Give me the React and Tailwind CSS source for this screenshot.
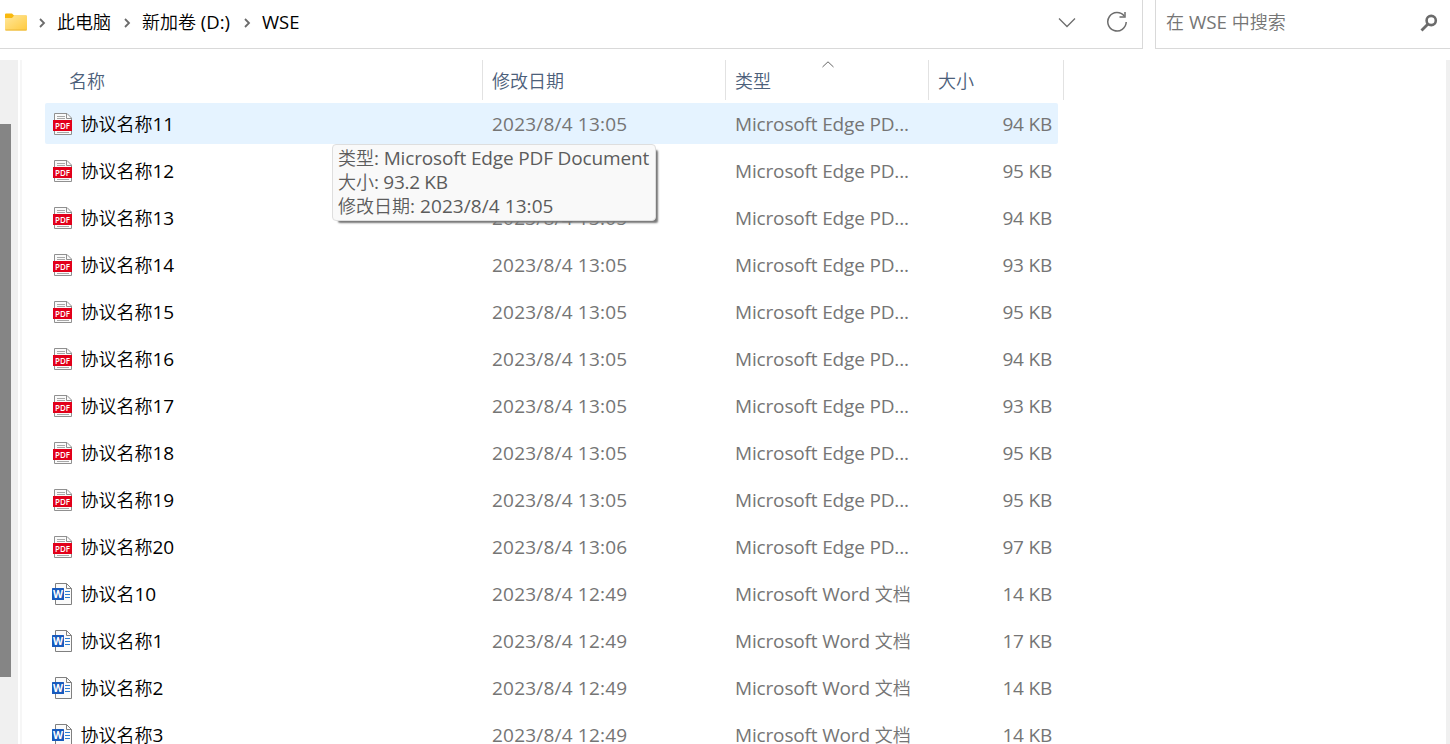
const rows = [
  ...[
    ["协议名称11", "13:05", "94 KB"],
    ["协议名称12", "13:05", "95 KB"],
    ["协议名称13", "13:05", "94 KB"],
    ["协议名称14", "13:05", "93 KB"],
    ["协议名称15", "13:05", "95 KB"],
    ["协议名称16", "13:05", "94 KB"],
    ["协议名称17", "13:05", "93 KB"],
    ["协议名称18", "13:05", "95 KB"],
    ["协议名称19", "13:05", "95 KB"],
    ["协议名称20", "13:06", "97 KB"],
  ].map(([name, time, size]) => ({ kind: "pdf", name, time, size, type: "Microsoft Edge PD..." })),
  ...[
    ["协议名10", "12:49", "14 KB"],
    ["协议名称1", "12:49", "17 KB"],
    ["协议名称2", "12:49", "14 KB"],
    ["协议名称3", "12:49", "14 KB"],
  ].map(([name, time, size]) => ({ kind: "word", name, time, size, type: "Microsoft Word 文档" })),
];

// Chinese runs are set slightly smaller and lighter than Latin runs.
function Mixed({ children, latin = "text-[19px]" }) {
  return children.split(/([\u4e00-\u9fff]+)/).filter(Boolean).map((part, i) => (
    <span key={i} className={/[\u4e00-\u9fff]/.test(part) ? "text-[18px] font-[350] tracking-normal" : `${latin} font-normal`}>{part}</span>
  ));
}

function PdfIcon() {
  return (
    <svg width="20" height="24" viewBox="0 0 20 24" className="mb-px shrink-0">
      <path d="M1.5 1.5H14L18.5 6V22.5H1.5Z" fill="#fafafa" stroke="#909090" />
      <path d="M13.5 1.5V6.5H18.5" fill="none" stroke="#909090" />
      <path d="M4 4.5H12M4 6.5H12M4 20.5H16" stroke="#a8a8a8" />
      <rect y="8" width="19" height="11" fill="#e2001a" />
      <text x="9.5" y="16.5" textAnchor="middle" textLength="15" lengthAdjust="spacingAndGlyphs" fill="#fff" className="font-['Open_Sans',sans-serif] text-[8.5px] font-semibold">PDF</text>
    </svg>
  );
}

function WordIcon() {
  return (
    <svg width="20" height="24" viewBox="0 0 20 24" className="mb-px shrink-0">
      <path d="M3.5 1.5H14.5L19.5 6.5V22.5H3.5Z" fill="#fafafa" stroke="#808080" />
      <path d="M14.5 1.5V6.5H19.5" fill="none" stroke="#808080" />
      <path d="M13 9.5H18M13 12.5H18M13 15.5H18" stroke="#2b7cd3" />
      <rect y="6" width="12" height="12" rx="0.5" fill="#185abd" />
      <text x="6" y="16" textAnchor="middle" textLength="10" lengthAdjust="spacingAndGlyphs" fill="#fff" className="font-['Open_Sans',sans-serif] text-[11px] font-bold">W</text>
    </svg>
  );
}

function Crumb() {
  return (
    <svg width="7" height="10" viewBox="0 0 7 10" fill="none" className="mt-px shrink-0">
      <path d="M1 1L5 5L1 9" stroke="#6b6b6b" strokeWidth="1.8" />
    </svg>
  );
}

function Toolbar() {
  return (
    <header className="flex h-[49px] shrink-0 leading-[45px]">
      <div className="flex w-[1143px] items-start border-r border-b border-[#d9d9d9]">
        <div className="flex h-[45px] items-center pl-[5px] text-black">
          <svg width="22" height="18" viewBox="0 0 22 18" className="mr-[12px] -mt-[2px]">
            <defs>
              <linearGradient id="folder" x2="1" y2="1">
                <stop stopColor="#ffe79b" />
                <stop offset="1" stopColor="#ffca3e" />
              </linearGradient>
            </defs>
            <path d="M0 1.5Q0 0.5 1 0.5H7L9 2.5H21Q22 2.5 22 3.5V10H0Z" fill="#f9b90e" />
            <path d="M0 5H7L9 2.7H22V16.5Q22 17.5 21 17.5H1Q0 17.5 0 16.5Z" fill="url(#folder)" />
            <path d="M0.5 17H21.5" stroke="#eab73a" />
          </svg>
          <Crumb />
          <span className="ml-[11px] w-[55px] whitespace-nowrap"><Mixed>此电脑</Mixed></span>
          <span className="ml-[12px] flex"><Crumb /></span>
          <span className="ml-[11px] w-[89px] whitespace-nowrap"><Mixed latin="text-[18.5px]">新加卷 (D:)</Mixed></span>
          <span className="ml-[13px] flex"><Crumb /></span>
          <span className="ml-[11px]"><Mixed latin="text-[18.5px]">WSE</Mixed></span>
        </div>
        <div className="ml-auto flex h-[44px] items-center pr-[14px]">
          <svg width="18" height="11" viewBox="0 0 18 11" fill="none" className="mr-[30px]">
            <path d="M1 1.5L9 9.5L17 1.5" stroke="#6d6d6d" strokeWidth="1.3" />
          </svg>
          <svg width="22" height="22" viewBox="0 0 22 22" fill="none" stroke="#6d6d6d" strokeWidth="1.5">
            <path d="M18.2 5A9.2 9.2 0 1 0 20.2 11" />
            <path d="M19 1V6H13.5" />
          </svg>
        </div>
      </div>
      <div className="ml-[12px] flex flex-1 border-b border-l border-[#d9d9d9] pr-[12px] pl-[10px] text-[#757575]">
        <span className="whitespace-nowrap"><Mixed latin="text-[18.8px]">在 WSE 中搜索</Mixed></span>
        <svg width="18" height="18" viewBox="0 0 18 18" fill="none" stroke="#6b6b6b" className="mt-[14px] ml-auto">
          <circle cx="11.2" cy="6.5" r="4.6" strokeWidth="2.6" />
          <path d="M8 10L1.5 16.5" strokeWidth="2.8" />
        </svg>
      </div>
    </header>
  );
}

function Tooltip() {
  return (
    <div className="absolute top-[144px] left-[332px] h-[77px] w-[324px] rounded-[4px] border border-[#dedede] bg-[#f9f9f9] pt-px pl-[5px] leading-[24px] whitespace-nowrap text-[#5c5c5c] shadow-[4px_4px_2px_-2px_#777]">
      <p className="h-[24px] tracking-[-0.15px]"><Mixed>类型: Microsoft Edge PDF Document</Mixed></p>
      <p className="h-[24px] tracking-[-0.3px]"><Mixed>大小: 93.2 KB</Mixed></p>
      <p className="h-[24px] tracking-[0.07px]"><Mixed>修改日期: 2023/8/4 13:05</Mixed></p>
    </div>
  );
}

export default function App() {
  return (
    <div className="relative flex h-[744px] w-[1450px] flex-col overflow-hidden bg-white font-['Open_Sans','Noto_Sans_CJK_SC',sans-serif]">
      <Toolbar />
      <div className="mt-[11px] flex min-h-0 flex-1">
        <div className="w-[18px] shrink-0 bg-[#f0f0f0] pt-[64px]">
          <div className="h-[553px] w-[11px] bg-[#858585]" />
        </div>
        <div className="ml-[2px] w-[2px] shrink-0 bg-[#f6f6f6]" />
        <main className="ml-[23px] w-[1019px] shrink-0">
          <div className="flex h-[40px] leading-[42px] text-[#4c607a]">
            <div className="w-[438px] border-r border-[#e2e2e2] pl-[24px]"><Mixed>名称</Mixed></div>
            <div className="w-[243px] border-r border-[#e2e2e2] pl-[9px]"><Mixed>修改日期</Mixed></div>
            <div className="relative w-[203px] border-r border-[#e2e2e2] pl-[9px]">
              <Mixed>类型</Mixed>
              <svg width="12" height="7" viewBox="0 0 12 7" fill="none" className="absolute top-[1px] left-[96px]">
                <path d="M0.5 6L6 0.8L11.5 6" stroke="#666" />
              </svg>
            </div>
            <div className="w-[135px] border-r border-[#e2e2e2] pl-[9px]"><Mixed>大小</Mixed></div>
          </div>
          <div className="mt-[3px] flex flex-col gap-[6px]">
            {rows.map((row, i) => (
              <div key={row.name} className={`flex h-[41px] w-[1013px] shrink-0 items-center rounded-[2px] pt-[2px] leading-[39px] whitespace-nowrap text-[#757575] ${i === 0 ? "bg-[#e5f3ff]" : ""}`}>
                <div className={`flex w-[447px] items-center text-black ${row.kind === "pdf" ? "pl-[8px]" : "pl-[7px]"}`}>
                  {row.kind === "pdf" ? <PdfIcon /> : <WordIcon />}
                  <span className={row.kind === "pdf" ? "ml-[7.5px]" : "ml-[8.5px]"}><Mixed>{row.name}</Mixed></span>
                </div>
                <div className="w-[243px] tracking-[0.2px]"><Mixed>{`2023/8/4 ${row.time}`}</Mixed></div>
                <div className="w-[200px] tracking-[-0.16px]"><Mixed>{row.type}</Mixed></div>
                <div className="flex-1 pr-[6px] text-right tracking-[-0.2px]"><Mixed>{row.size}</Mixed></div>
              </div>
            ))}
          </div>
        </main>
        <div className="ml-auto w-[4px] bg-[#f0f0f0]" />
      </div>
      <Tooltip />
    </div>
  );
}
